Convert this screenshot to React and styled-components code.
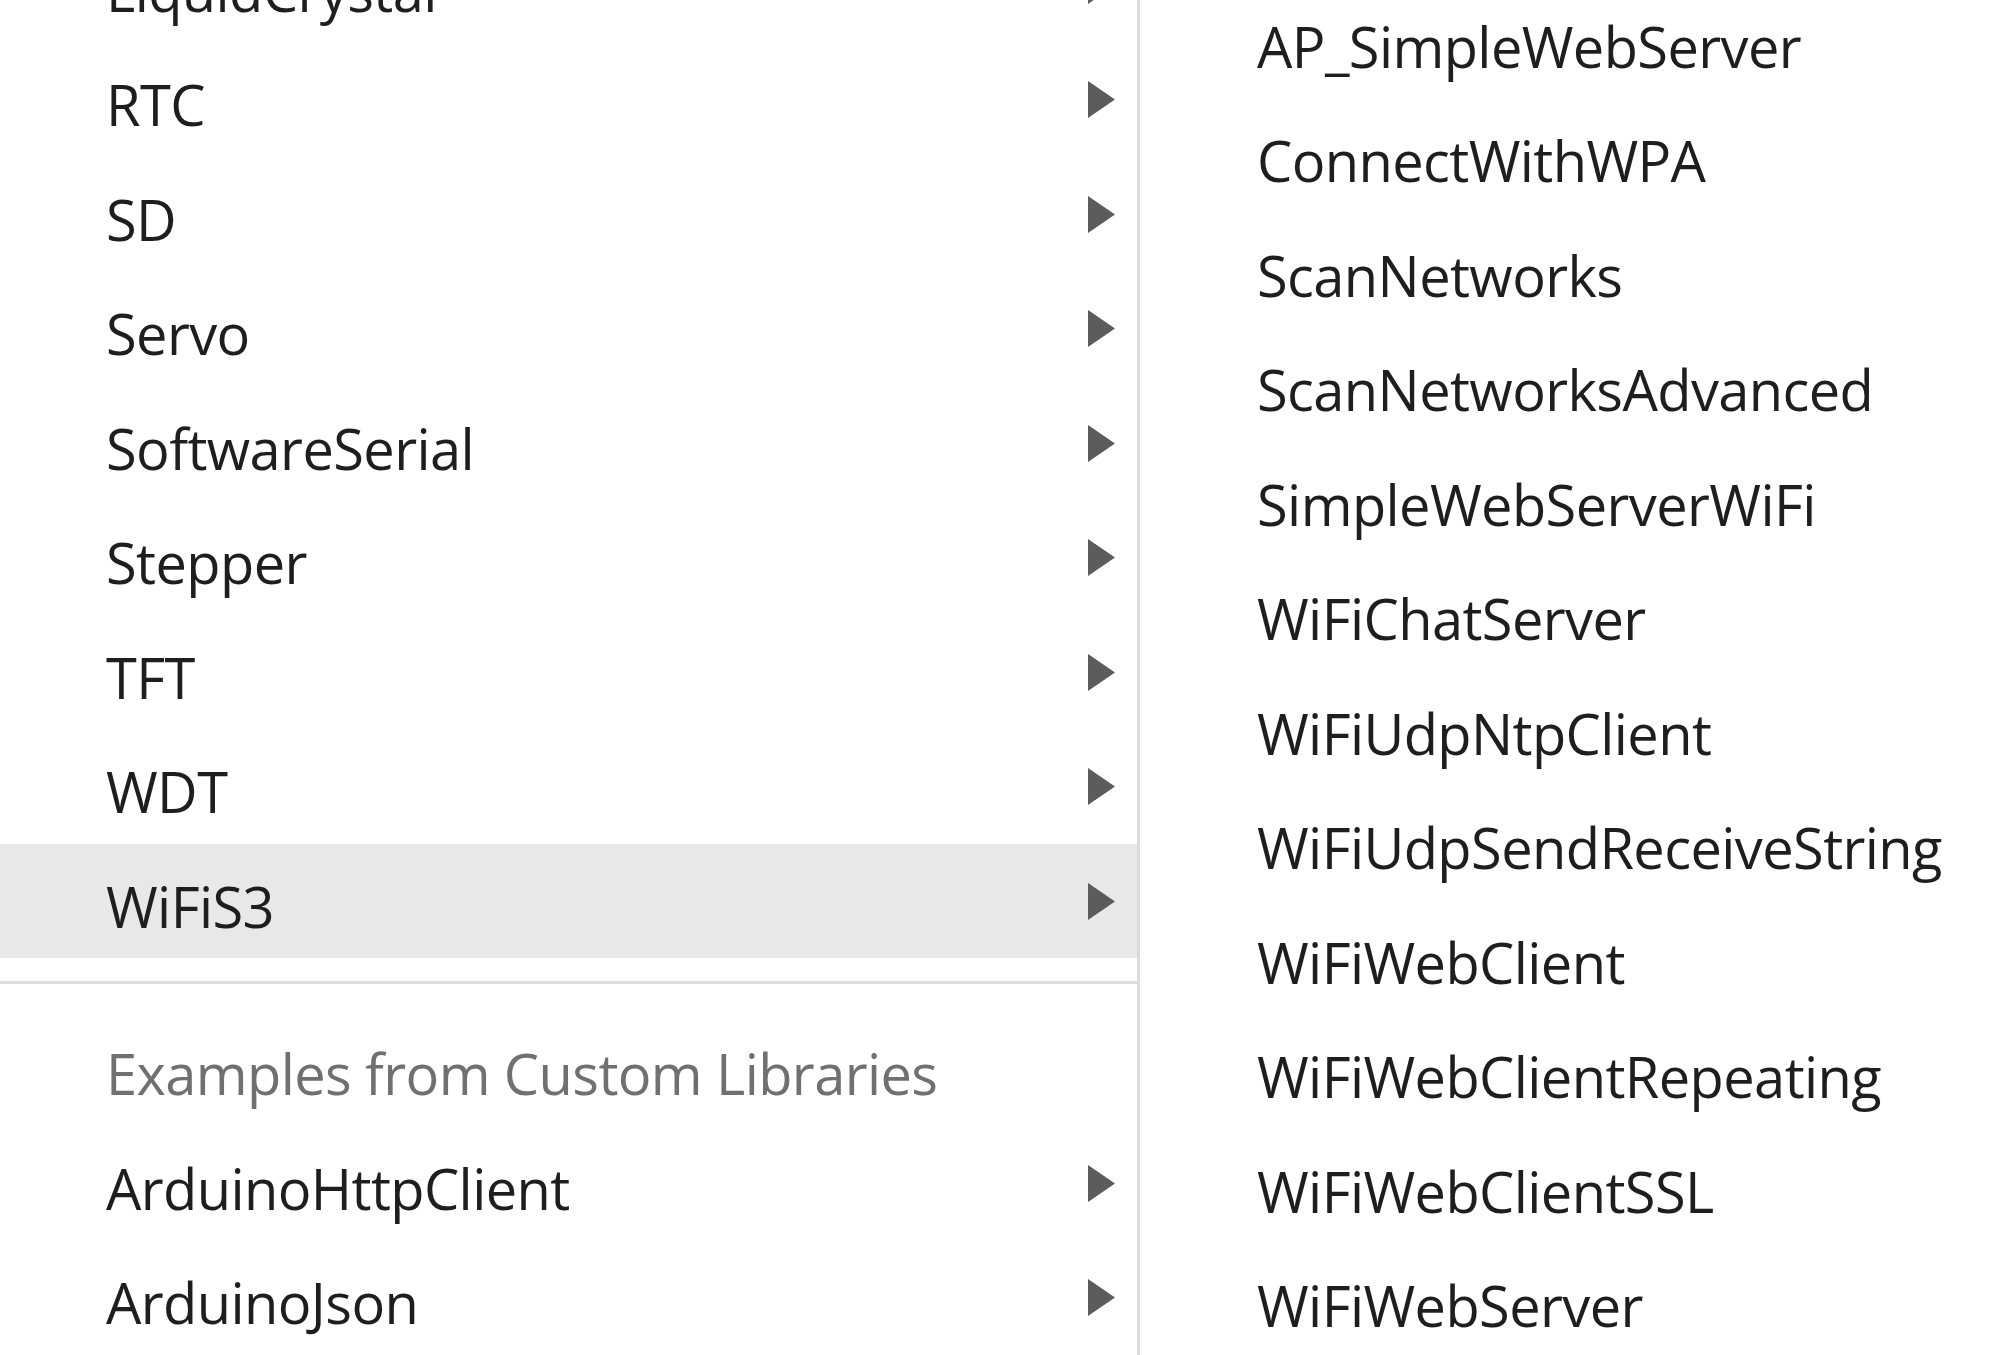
import styled, { createGlobalStyle } from 'styled-components';

const GlobalStyle = createGlobalStyle`
  html, body {
    margin: 0;
    padding: 0;
    background: #fff;
    overflow: hidden;
  }
  body {
    font-family: "Open Sans", "Noto Sans", "Noto Sans CJK KR", sans-serif;
  }
`;

const Screen = styled.div`
  display: flex;
  width: 2000px;
  height: 1355px;
  overflow: hidden;
  background: #fff;
`;

const Menu = styled.div`
  display: flex;
  flex-direction: column;
  flex-shrink: 0;
  width: ${(p) => p.width || 'auto'};
  flex-grow: ${(p) => (p.width ? 0 : 1)};
  margin-top: ${(p) => p.offset}px;
  padding-left: ${(p) => p.indent || 0}px;
  box-sizing: border-box;
  border-right: ${(p) => (p.divider ? '3px solid #d9d9de' : 'none')};
  height: calc(100% - ${(p) => p.offset}px);
`;

const Row = styled.div`
  display: flex;
  align-items: center;
  flex-shrink: 0;
  height: 114.5px;
  padding-left: ${(p) => p.indent || 0}px;
  padding-right: 22px;
  background: ${(p) => (p.active ? '#e8e8e8' : 'transparent')};
`;

const Label = styled.span`
  flex: 1;
  margin-top: 9px;
  font-size: 56px;
  line-height: 1;
  letter-spacing: -0.6px;
  color: ${(p) => (p.muted ? '#707070' : '#1e1e1e')};
  white-space: nowrap;
`;

const Separator = styled.div`
  flex-shrink: 0;
  padding: 22.75px 0 27.25px;

  &::after {
    content: '';
    display: block;
    height: 3px;
    background: #dedede;
  }
`;

const Arrow = () => (
  <svg width="27" height="37" viewBox="0 0 27 37">
    <polygon points="0,0 27,18.5 0,37" fill="#5c5c5c" />
  </svg>
);

const libraries = [
  'LiquidCrystal',
  'RTC',
  'SD',
  'Servo',
  'SoftwareSerial',
  'Stepper',
  'TFT',
  'WDT',
  'WiFiS3',
];

const customLibraries = ['ArduinoHttpClient', 'ArduinoJson'];

const examples = [
  'AP_SimpleWebServer',
  'ConnectWithWPA',
  'ScanNetworks',
  'ScanNetworksAdvanced',
  'SimpleWebServerWiFi',
  'WiFiChatServer',
  'WiFiUdpNtpClient',
  'WiFiUdpSendReceiveString',
  'WiFiWebClient',
  'WiFiWebClientRepeating',
  'WiFiWebClientSSL',
  'WiFiWebServer',
];

const App = () => (
  <>
    <GlobalStyle />
    <Screen>
      <Menu width="1140px" offset={-72.25} divider>
        {libraries.map((name) => (
          <Row key={name} indent={106} active={name === 'WiFiS3'}>
            <Label>{name}</Label>
            <Arrow />
          </Row>
        ))}
        <Separator />
        <Row indent={106}>
          <Label muted>Examples from Custom Libraries</Label>
        </Row>
        {customLibraries.map((name) => (
          <Row key={name} indent={106}>
            <Label>{name}</Label>
            <Arrow />
          </Row>
        ))}
      </Menu>
      <Menu offset={-16} indent={117}>
        {examples.map((name) => (
          <Row key={name}>
            <Label>{name}</Label>
          </Row>
        ))}
      </Menu>
    </Screen>
  </>
);

export default App;
